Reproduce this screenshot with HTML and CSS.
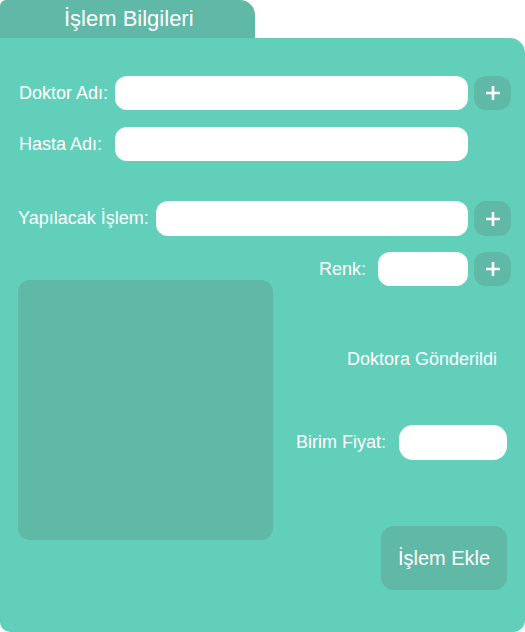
FILE: index.html
```html
<!DOCTYPE html>
<html lang="tr">
<head>
<meta charset="utf-8">
<link rel="stylesheet" href="styles.css">
</head>
<body>
<div class="tab">İşlem Bilgileri</div>
<div class="panel">
  <div class="row">
    <label class="lbl lbl-fixed">Doktor Adı:</label>
    <div class="input grow"></div>
    <button class="plus"><svg viewBox="0 0 16 16" width="16" height="16"><path d="M8 1v14M1 8h14" stroke="#fff" stroke-width="2.6" fill="none"/></svg></button>
  </div>
  <div class="row row-2">
    <label class="lbl lbl-fixed">Hasta Adı:</label>
    <div class="input grow"></div>
    <span class="plus-space"></span>
  </div>
  <div class="row row-3">
    <label class="lbl lbl-auto">Yapılacak İşlem:</label>
    <div class="input grow tall"></div>
    <button class="plus tall"><svg viewBox="0 0 16 16" width="16" height="16"><path d="M8 1v14M1 8h14" stroke="#fff" stroke-width="2.6" fill="none"/></svg></button>
  </div>
  <div class="lower">
    <div class="preview"></div>
    <div class="side">
      <div class="row end">
        <label class="lbl renk">Renk:</label>
        <div class="input color"></div>
        <button class="plus"><svg viewBox="0 0 16 16" width="16" height="16"><path d="M8 1v14M1 8h14" stroke="#fff" stroke-width="2.6" fill="none"/></svg></button>
      </div>
      <div class="status">Doktora Gönderildi</div>
      <div class="row end price-row">
        <label class="lbl price">Birim Fiyat:</label>
        <div class="input price-in"></div>
      </div>
      <div class="actions">
        <button class="add">İşlem Ekle</button>
      </div>
    </div>
  </div>
</div>
</body>
</html>
```

FILE: styles.css
```css
* { box-sizing: border-box; }
html, body {
  margin: 0;
  padding: 0;
  background: #ffffff;
  font-family: "Liberation Sans", Arial, sans-serif;
  color: #ffffff;
}
.tab {
  width: 255px;
  height: 38px;
  background: #60b8a7;
  border-radius: 6px 15px 0 0;
  font-size: 22px;
  line-height: 38px;
  padding-left: 64px;
}
.panel {
  width: 525px;
  height: 594px;
  background: #62cfbb;
  border-radius: 0 15px 12px 10px;
  padding: 38px 14px 0 18px;
}
.row {
  display: flex;
  align-items: center;
  height: 34px;
}
.row-2 { margin-top: 17px; }
.row-3 { margin-top: 40px; height: 35px; }
.lbl {
  font-size: 18px;
  white-space: nowrap;
}
.lbl-fixed { width: 97px; flex: none; padding-left: 1px; }
.lbl-auto { margin-right: 7px; }
.input {
  background: #ffffff;
  border-radius: 12px;
  height: 34px;
}
.input.tall { height: 35px; }
.grow { flex: 1; }
.plus {
  flex: none;
  width: 37px;
  height: 34px;
  margin-left: 6px;
  border: none;
  padding: 0;
  border-radius: 12px;
  background: #60b8a7;
  display: flex;
  align-items: center;
  justify-content: center;
}
.plus.tall { height: 35px; }
.plus-space { width: 43px; flex: none; }
.lower {
  display: grid;
  grid-template-columns: 255px 1fr;
  margin-top: 16px;
}
.preview {
  margin-top: 28px;
  height: 260px;
  background: #60b8a7;
  border-radius: 12px;
}
.side {
  display: flex;
  flex-direction: column;
}
.end { justify-content: flex-end; }
.renk { margin-right: 12px; }
.color { width: 90px; }
.status {
  margin-top: 63px;
  font-size: 18px;
  line-height: 21px;
  text-align: right;
  padding-right: 14px;
}
.price-row {
  margin-top: 55px;
  height: 35px;
  padding-right: 4px;
}
.price { margin-right: 13px; }
.price-in { width: 108px; height: 35px; border-radius: 14px; }
.actions {
  display: flex;
  justify-content: flex-end;
  padding-right: 4px;
  margin-top: 66px;
}
.add {
  width: 126px;
  height: 64px;
  border: none;
  border-radius: 13px;
  background: #60b8a7;
  color: #ffffff;
  font-family: "Liberation Sans", Arial, sans-serif;
  font-size: 20px;
  padding: 0;
}
```
